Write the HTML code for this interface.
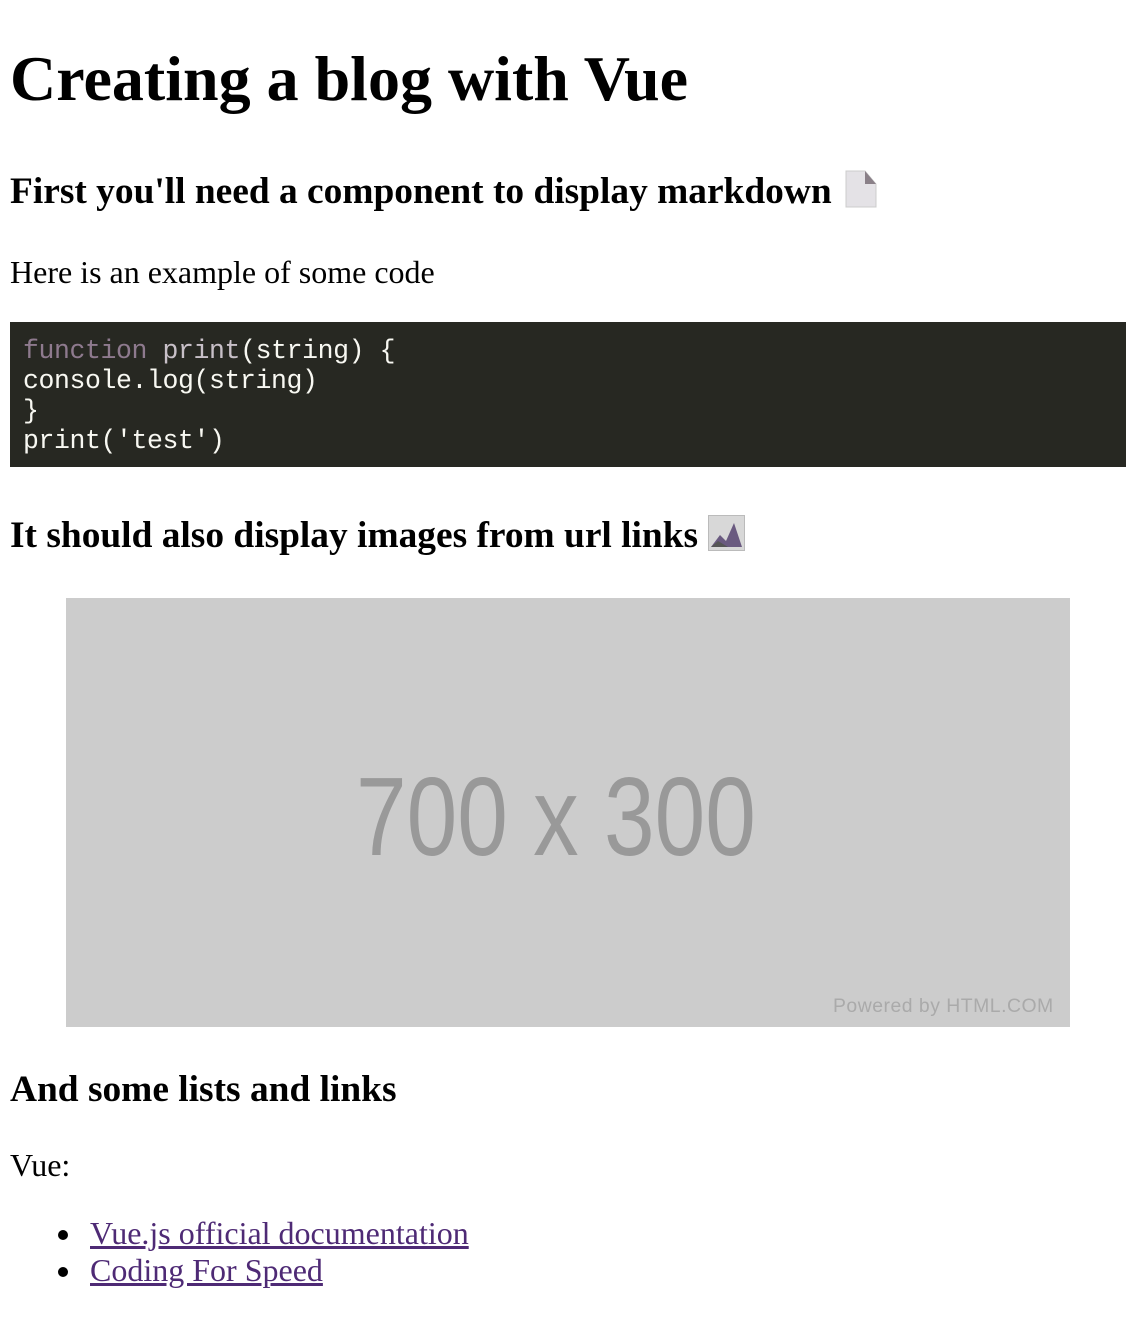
<!DOCTYPE html>
<html><head><meta charset="utf-8"><style>
html,body{margin:0;padding:0;background:#fff;width:1132px;height:1340px;overflow:hidden;position:relative;font-family:"Liberation Serif",serif;color:#000}
.a{position:absolute;white-space:nowrap;margin:0}
h1.a{font-size:64px;line-height:64px;font-weight:bold}
h3.a{font-size:37.4px;line-height:37px;font-weight:bold}
p.a{font-size:32px;line-height:32px}
pre{position:absolute;left:10px;top:322px;width:1116px;height:145px;background:#272822;margin:0;box-sizing:border-box;padding:14px 13px;font-family:"Liberation Mono",monospace;font-size:26.5px;line-height:30px;color:#f8f8f2;letter-spacing:-0.4px}
.k{color:#8e7a8e}.f{color:#c8c0c8}
.img{position:absolute;left:66px;top:598px;width:1004px;height:429px;background:#cccccc}
.big{position:absolute;left:356px;top:762px;font-family:"Liberation Sans",sans-serif;font-size:111px;line-height:111px;color:#999;transform:scaleX(.82);transform-origin:left top;white-space:nowrap}
.pw{position:absolute;left:833px;top:997px;font-family:"Liberation Sans",sans-serif;font-size:19.4px;line-height:19px;color:#aaa;letter-spacing:.5px;white-space:nowrap}
a{color:#4e2a75;text-decoration:underline}
.b{position:absolute;left:58px;width:10px;height:10px;border-radius:50%;background:#000}
</style></head><body>
<h1 class="a" style="left:10px;top:47px">Creating a blog with Vue</h1>
<h3 class="a" style="left:10px;top:173px">First you'll need a component to display markdown</h3>
<svg class="a" style="left:845px;top:170px" width="32" height="38" viewBox="0 0 32 38"><path d="M1 1H20L31 14V37H1Z" fill="#e4e2e6" stroke="#ccc"/><path d="M20 1V14H31Z" fill="#8a8088"/></svg>
<p class="a" style="left:10px;top:256px">Here is an example of some code</p>
<pre><span class="k">function</span> <span class="f">print</span>(string) {
console.log(string)
}
print('test')</pre>
<h3 class="a" style="left:10px;top:517px">It should also display images from url links</h3>
<svg class="a" style="left:708px;top:515px" width="37" height="36" viewBox="0 0 37 36"><rect x="0.5" y="0.5" width="36" height="35" fill="#d8d8d8" stroke="#bbb"/><path d="M3 32L12 20L18 26L26 8L34 32Z" fill="#6a5a80"/><path d="M3 32L10 26L20 32Z" fill="#555"/></svg>
<div class="img"></div>
<div class="big">700 x 300</div>
<div class="pw">Powered by HTML.COM</div>
<h3 class="a" style="left:10px;top:1071px">And some lists and links</h3>
<p class="a" style="left:10px;top:1149px">Vue:</p>
<div class="b" style="top:1230px"></div>
<p class="a" style="left:90px;top:1217px"><a>Vue.js official documentation</a></p>
<div class="b" style="top:1267px"></div>
<p class="a" style="left:90px;top:1254px"><a>Coding For Speed</a></p>
</body></html>
